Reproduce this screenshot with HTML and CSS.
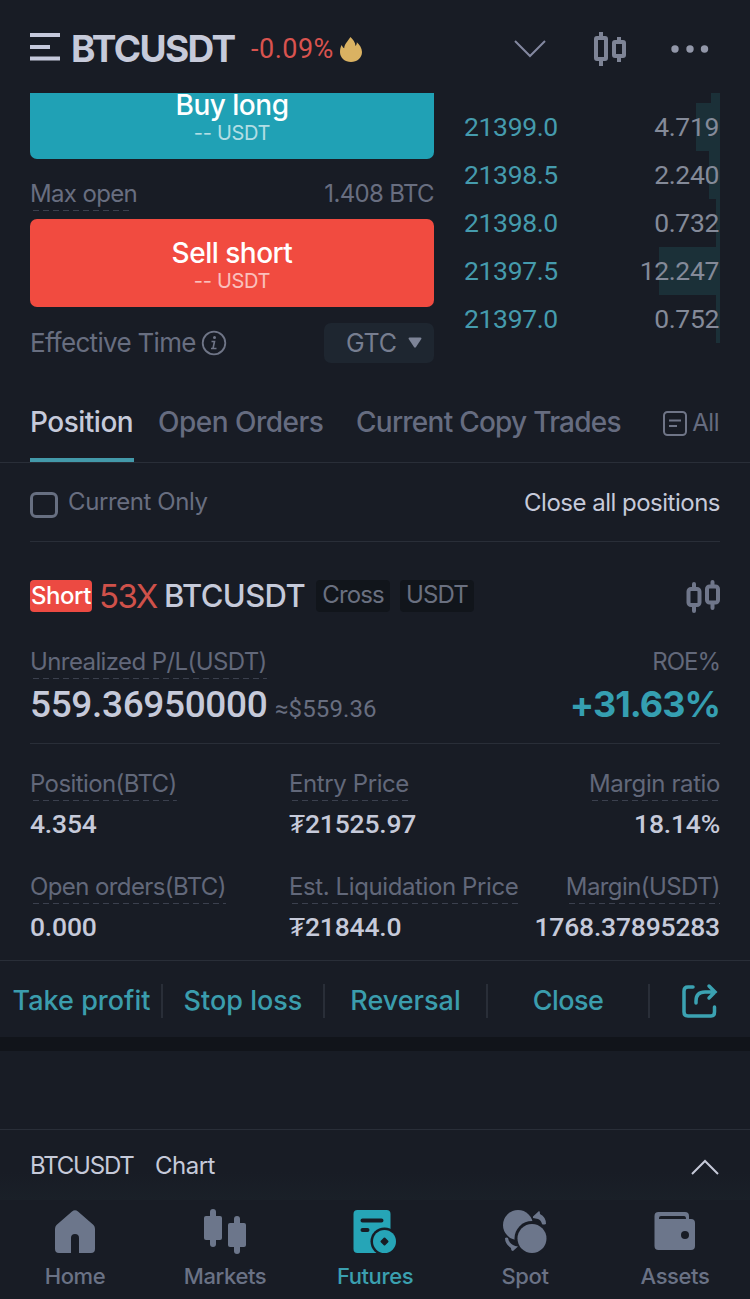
FILE: index.html
```html
<!DOCTYPE html>
<html lang="en">
<head>
    <meta charset="UTF-8">
    <meta name="viewport" content="width=device-width, initial-scale=1.0">
    <title>BTCUSDT Futures</title>
    <link rel="stylesheet" href="styles.css">
</head>
<body>
    <header class="header">
        <svg class="menu-icon" width="30" height="28" viewBox="0 0 30 28"><path d="M0 2h30M0 14h20M0 25.5h30" stroke="#c5c9dc" stroke-width="4"/></svg>
        <h1 class="pair">BTCUSDT</h1>
        <span class="change">-0.09%</span>
        <svg class="flame" width="22" height="25" viewBox="0 0 22 25"><path d="M10.500 0c2.500 2.500 4.800 5 5 9 1-1 1.400-2.200 1.300-3.800C19.500 7.500 22 11 22 15c0 6-5 10-11 10S0 21 0 15c0-2.500.5-5 1.700-7 .6 1.600 1.300 2.600 2.500 3.300C4.500 7 7.500 4.500 10.500 0z" fill="#dab262"/></svg>
        <svg class="chevron" width="32" height="18" viewBox="0 0 32 18"><path d="M1 1l15 15L31 1" fill="none" stroke="#8388a0" stroke-width="2"/></svg>
        <svg class="candles" width="34" height="36" viewBox="0 0 34 36" fill="none" stroke="#7e8496"><path d="M8 1v6M8 28v7M26 6v5M26 25v6" stroke-width="4"/><rect x="3" y="7" width="10" height="21" rx="1" stroke-width="4"/><rect x="21" y="11" width="10" height="14" rx="1" stroke-width="4"/></svg>
        <svg class="more" width="38" height="8" viewBox="0 0 38 8" fill="#9297a9"><circle cx="4" cy="4" r="3.700"/><circle cx="19" cy="4" r="3.700"/><circle cx="33.500" cy="4" r="3.700"/></svg>
    </header>

    <main class="trade">
        <section class="order-form">
            <button class="btn buy"><span class="btn-title">Buy long</span><span class="btn-sub">-- USDT</span></button>
            <div class="max-open">
                <span class="max-label dashed">Max open</span>
                <span class="max-value">1.408 BTC</span>
            </div>
            <button class="btn sell"><span class="btn-title">Sell short</span><span class="btn-sub">-- USDT</span></button>
            <div class="effective">
                <span class="effective-label">Effective Time</span>
                <svg width="26" height="26" viewBox="0 0 26 26" fill="none" stroke="#6f7587"><circle cx="13" cy="13" r="11.300" stroke-width="1.800"/><circle cx="13.500" cy="7.500" r="1.500" fill="#6f7587" stroke="none"/><path d="M10.500 11.500h3l-1.500 7M10 18.500h5.500" stroke-width="1.600"/></svg>
                <button class="gtc">GTC<svg width="14" height="12" viewBox="0 0 14 12"><path d="M1.500.5h11q1.500 0 .8 1.500L8 10q-1 1.300-2 0L.7 2Q0 .5 1.500.5z" fill="#7d8497"/></svg></button>
            </div>
        </section>
        <section class="book">
            <div class="book-row first"><i class="depth" style="width: 9px"></i></div>
            <div class="book-row"><i class="depth" style="width: 24px"></i><span class="price">21399.0</span><span class="amount">4.719</span></div>
            <div class="book-row"><i class="depth" style="width: 11px"></i><span class="price">21398.5</span><span class="amount">2.240</span></div>
            <div class="book-row"><i class="depth" style="width: 4px"></i><span class="price">21398.0</span><span class="amount">0.732</span></div>
            <div class="book-row"><i class="depth" style="width: 61px"></i><span class="price">21397.5</span><span class="amount">12.247</span></div>
            <div class="book-row"><i class="depth" style="width: 4px"></i><span class="price">21397.0</span><span class="amount">0.752</span></div>
        </section>
    </main>

    <nav class="tabs">
        <a class="tab active">Position</a>
        <a class="tab orders">Open Orders</a>
        <a class="tab copy">Current Copy Trades</a>
        <a class="all"><svg width="24" height="25" viewBox="0 0 24 25" fill="none" stroke="#6f7587" stroke-width="2"><rect x="1" y="1" width="22" height="23" rx="3.500"/><path d="M6 9.500h12M6 15h8"/></svg><span>All</span></a>
    </nav>

    <div class="filter">
        <span class="checkbox"></span>
        <span class="current-only">Current Only</span>
        <span class="close-all">Close all positions</span>
    </div>

    <section class="position">
        <div class="position-head">
            <span class="short">Short</span>
            <span class="leverage">53X</span>
            <span class="symbol">BTCUSDT</span>
            <span class="tag cross">Cross</span>
            <span class="tag usdt">USDT</span>
            <svg class="candles-small" width="34" height="34" viewBox="0 0 34 34" fill="none" stroke="#6f768a"><path d="M8 4v5M8 26v5M26.500 2v4M26.500 24v4" stroke-width="4" stroke-linecap="round"/><rect x="2.500" y="9" width="11" height="16" rx="2.500" stroke-width="4"/><rect x="21" y="6.500" width="11" height="16" rx="2.500" stroke-width="4"/></svg>
        </div>
        <div class="pnl-labels"><span class="label dashed">Unrealized P/L(USDT)</span><span class="label roe">ROE%</span></div>
        <div class="pnl">
            <span class="pnl-value">559.36950000</span>
            <span class="pnl-usd">≈$559.36</span>
            <span class="pnl-percent">+31.63%</span>
        </div>
        <div class="stats">
            <div class="stat"><span class="label dashed">Position(BTC)</span><span class="value">4.354</span></div>
            <div class="stat"><span class="label dashed wide">Entry Price</span><span class="value">₮21525.97</span></div>
            <div class="stat right"><span class="label dashed wide">Margin ratio</span><span class="value">18.14%</span></div>
            <div class="stat"><span class="label dashed">Open orders(BTC)</span><span class="value">0.000</span></div>
            <div class="stat"><span class="label dashed wide">Est. Liquidation Price</span><span class="value">₮21844.0</span></div>
            <div class="stat right"><span class="label dashed">Margin(USDT)</span><span class="value">1768.37895283</span></div>
        </div>
    </section>

    <div class="actions">
        <a class="action take">Take profit</a>
        <a class="action">Stop loss</a>
        <a class="action">Reversal</a>
        <a class="action close">Close</a>
        <a class="share"><svg width="36" height="36" viewBox="0 0 36 36" fill="none" stroke="#3ba2b2" stroke-width="3.500" stroke-linecap="round"><path d="M11 4H6Q2 4 2 8v21q0 4 4 4h23q3.500 0 3.500-4v-5"/><path d="M14 20v-2q0-9 9-9h10M27 3l6 6-6 6"/></svg></a>
    </div>
    <div class="band"></div>
    <div class="chart-bar">
        <span class="chart-pair">BTCUSDT</span><span class="chart-word">Chart</span>
        <svg width="28" height="16" viewBox="0 0 28 16"><path d="M1 15L14 2l13 13" fill="none" stroke="#c5c9d8" stroke-width="2"/></svg>
    </div>

    <footer class="bottom-nav">
        <a class="nav-item home"><svg width="44" height="46" viewBox="0 0 44 46"><path d="M19 2.500q3-2.500 6 0L40.500 16Q42 17.500 42 20v20q0 4-4 4H26V29a4 4 0 0 0-8 0v15H6q-4 0-4-4V20q0-2.500 1.500-4z" fill="#6c768b"/></svg><span>Home</span></a>
        <a class="nav-item markets"><svg width="44" height="46" viewBox="0 0 44 46" fill="#6c768b"><rect x="1" y="7" width="18" height="24" rx="2"/><rect x="7" y="0" width="6" height="38" rx="3"/><rect x="25" y="14" width="18" height="24" rx="2"/><rect x="31" y="7" width="6" height="38" rx="3"/></svg><span>Markets</span></a>
        <a class="nav-item futures"><svg width="46" height="46" viewBox="0 0 46 46"><rect x="1.500" y="1" width="37" height="43" rx="4" fill="#26a5b7"/><path d="M10.500 11.500h19M10.500 21h5" stroke="#181c25" stroke-width="4" stroke-linecap="round"/><circle cx="32.500" cy="32.500" r="14" fill="#181c25"/><circle cx="32.500" cy="32.500" r="11.500" fill="#26a5b7"/><path d="M32.500 29.500l3 3-3 3-3-3z" fill="#181c25" stroke="#181c25" stroke-width="2" stroke-linejoin="round"/></svg><span>Futures</span></a>
        <a class="nav-item spot"><svg width="46" height="46" viewBox="0 0 46 46" fill="#6c768b"><circle cx="16" cy="16" r="15"/><circle cx="30" cy="29.500" r="17.500" fill="#181c25"/><circle cx="30" cy="29.500" r="14.500"/><path d="M31 7.500L37 2q1 0 1 3 6 3 6 10-3 1-4 0-1-4-4-5l-5-1z"/><path d="M16 37.500L11 42q-2 0-2-3-6-4-6-10 2-1 3 0 1 5 5 7 2 1 5 1.500z"/></svg><span>Spot</span></a>
        <a class="nav-item assets"><svg width="44" height="46" viewBox="0 0 44 46"><path d="M1.500 7q0-4 4-4H32q4 0 4 4v3h2q4 0 4 4v23q0 4-4 4H5.500q-4 0-4-4z" fill="#6c768b"/><path d="M6 9q0-2 2-2h23q2 0 2 3H6z" fill="#181c25"/><circle cx="32" cy="26" r="4" fill="#181c25"/></svg><span>Assets</span></a>
    </footer>
</body>
</html>
```
FILE: styles.css
```css
* {
    box-sizing: border-box;
}
body {
    margin: 0;
    width: 750px;
    height: 1299px;
    overflow: hidden;
    background: #181c25;
    color: #c6cada;
    font-family: Inter, "Liberation Sans", sans-serif;
    font-size: 24px;
    line-height: 32px;
    letter-spacing: -0.5px;
    white-space: nowrap;
}
svg {
    display: block;
    flex: none;
}
button {
    border: none;
    padding: 0;
    font-family: inherit;
    letter-spacing: inherit;
}
/* Header */
.header {
    height: 93px;
    padding: 4px 41px 0 30px;
    display: flex;
    align-items: center;
}
.menu-icon {
    margin-top: -4px;
}
.pair {
    margin: 0 0 0 11px;
    width: 180px;
    font-size: 37px;
    font-weight: 700;
    letter-spacing: -1.6px;
}
.change {
    width: 89px;
    color: #d9534f;
    font-family: Roboto, sans-serif;
    font-size: 27px;
    letter-spacing: 0.5px;
}
.flame {
    margin-top: 1px;
}
.chevron {
    margin-left: 152px;
}
.candles {
    margin-left: 47px;
}
.more {
    margin-left: auto;
}
/* Order form and order book */
.trade {
    height: 299px;
    overflow: hidden;
    display: flex;
    justify-content: space-between;
    padding: 0 30px;
}
.order-form {
    width: 404px;
    margin-top: -22px;
}
.btn {
    width: 404px;
    height: 88px;
    padding-top: 9px;
    border-radius: 7px;
    color: #fff;
    display: flex;
    flex-direction: column;
    align-items: center;
    justify-content: center;
}
.buy {
    background: #20a1b5;
}
.sell {
    background: #f14b40;
}
.btn-title {
    font-size: 28px;
    font-weight: 500;
    line-height: 24px;
}
.btn-sub {
    margin-top: 4px;
    font-size: 20px;
    line-height: 25px;
    letter-spacing: -0.3px;
    opacity: 0.65;
}
.max-open {
    height: 60px;
    padding-top: 19px;
    display: flex;
    justify-content: space-between;
    color: #686e80;
    letter-spacing: -0.65px;
}
.max-label {
    height: 33px;
}
.label {
    color: #62687a;
    height: 33px;
    letter-spacing: -0.6px;
}
.wide {
    letter-spacing: -0.4px;
}
.dashed {
    background: repeating-linear-gradient(90deg, transparent 0 3px, #3b404e 3px 9px, transparent 9px 10px) bottom / 100% 1px no-repeat;
}
.max-label.dashed {
    background-position: left bottom;
    background-size: 100px 1px;
}
.effective {
    margin-top: 16px;
    height: 40px;
    display: flex;
    align-items: center;
    color: #686e80;
    font-size: 26px;
    letter-spacing: -0.7px;
}
.effective svg {
    margin-left: 5px;
}
.gtc {
    width: 110px;
    height: 40px;
    margin-left: auto;
    padding-left: 22px;
    border-radius: 7px;
    background: #1e2630;
    color: #777e90;
    font-size: 25px;
    letter-spacing: -0.3px;
    display: flex;
    align-items: center;
}
.effective .gtc svg {
    margin-left: 11px;
}
.book {
    width: 256px;
}
.book-row {
    position: relative;
    height: 48px;
    padding-right: 1px;
    display: flex;
    justify-content: space-between;
    align-items: center;
    font-family: Roboto, sans-serif;
    font-size: 26.5px;
    letter-spacing: -0.35px;
}
.first {
    height: 10px;
}
.depth {
    position: absolute;
    top: 0;
    right: 0;
    height: 100%;
    background: #1b3038;
}
.price {
    color: #459bad;
}
.amount {
    position: relative;
    color: #848a99;
}
/* Tabs */
.tabs {
    height: 71px;
    padding: 0 31px 0 30px;
    border-bottom: 1px solid #292e38;
    display: flex;
    color: #666c80;
    font-size: 28px;
    font-weight: 500;
    line-height: 61px;
}
.tab {
    height: 70px;
}
.active {
    width: 104px;
    margin-right: 24px;
    border-bottom: 4px solid #4399aa;
    color: #c6cada;
}
.orders {
    width: 198px;
}
.copy {
    letter-spacing: -0.75px;
}
.all {
    margin-left: auto;
    display: flex;
    font-size: 24px;
    font-weight: 400;
    line-height: 62px;
}
.all svg {
    margin: 19px 5px 0 0;
}
.filter {
    height: 79px;
    margin: 0 30px;
    border-bottom: 1px solid #292e38;
    display: flex;
    align-items: center;
}
.checkbox {
    width: 28px;
    height: 26px;
    margin: 5px 10px 0 0;
    border: 3px solid #676f81;
    border-radius: 6px;
}
.current-only {
    color: #686e80;
    letter-spacing: -0.4px;
}
.close-all {
    margin: 2px 0 0 auto;
}
/* Open position */
.position {
    height: 418px;
    padding: 0 30px;
}
.position-head {
    height: 108px;
    display: flex;
    align-items: center;
}
.short {
    width: 62px;
    height: 32px;
    background: #ec4a42;
    border-radius: 4px;
    color: #fff;
    text-align: center;
    font-weight: 500;
}
.leverage {
    width: 65px;
    padding-left: 7px;
    color: #cf514a;
    font-size: 33px;
    letter-spacing: -1.5px;
}
.symbol {
    width: 151px;
    padding-left: 7px;
    font-size: 31px;
    font-weight: 500;
    letter-spacing: -0.6px;
}
.tag {
    height: 32px;
    width: 74px;
    margin-left: 8px;
    border-radius: 4px;
    background: #11151b;
    color: #6a7080;
    line-height: 30px;
    letter-spacing: -0.9px;
    text-align: center;
}
.tag.usdt {
    margin-left: 10px;
}
.candles-small {
    margin: 2px 0 0 auto;
}
.pnl-labels {
    height: 34px;
    margin-top: -4px;
    display: flex;
    justify-content: space-between;
}
.roe {
    letter-spacing: -1px;
}
.pnl {
    height: 64px;
    border-bottom: 1px solid #292e38;
    display: flex;
    align-items: baseline;
    line-height: 48px;
}
.pnl-value {
    width: 245px;
    font-family: Roboto, sans-serif;
    font-size: 37px;
    font-weight: 500;
    letter-spacing: -0.35px;
}
.pnl-usd {
    color: #686e80;
    font-family: Roboto, sans-serif;
    font-size: 24px;
    letter-spacing: 0.1px;
}
.pnl-percent {
    margin-left: auto;
    color: #359fb1;
    font-size: 36px;
    font-weight: 700;
    letter-spacing: -1px;
}
.stats {
    padding-top: 24px;
    display: grid;
    grid-template-columns: 259px 231px 200px;
    grid-auto-rows: 103px;
}
.stat {
    display: flex;
    flex-direction: column;
    align-items: flex-start;
}
.right {
    align-items: flex-end;
}
.value {
    margin-top: 7px;
    font-family: Roboto, sans-serif;
    font-size: 26.5px;
    font-weight: 500;
    letter-spacing: -0.2px;
}
/* Position actions */
.actions {
    height: 77px;
    border-top: 1px solid #292e38;
    padding-top: 4px;
    display: grid;
    grid-template-columns: 163px 162px 163px 162px 100px;
    align-items: center;
    color: #3b9dad;
    font-size: 27px;
    font-weight: 500;
    letter-spacing: 0;
    text-align: center;
}
.action {
    height: 34px;
    line-height: 34px;
    border-right: 2px solid #292e38;
}
.take {
    padding-left: 2px;
}
.close {
    letter-spacing: -0.6px;
}
.share {
    padding-left: 32px;
}
.band {
    height: 14px;
    background: #11141a;
}
.chart-bar {
    height: 71px;
    margin-top: 78px;
    padding: 2px 31px 0 30px;
    border-top: 1px solid #292e38;
    background: linear-gradient(#181c25 60%, #1a2028);
    display: flex;
    align-items: center;
}
.chart-pair {
    width: 125px;
    letter-spacing: -1.2px;
}
.chart-bar svg {
    margin-left: auto;
    margin-top: 2px;
}
/* Bottom navigation */
.bottom-nav {
    height: 99px;
    padding-top: 9px;
    display: grid;
    grid-template-columns: repeat(5, 150px);
    color: #6a7285;
    font-size: 22px;
    font-weight: 500;
    line-height: 28px;
    letter-spacing: -0.4px;
}
.nav-item {
    display: flex;
    flex-direction: column;
    align-items: center;
}
.nav-item span {
    margin-top: 7px;
}
.futures {
    color: #3ba0b0;
}
```
